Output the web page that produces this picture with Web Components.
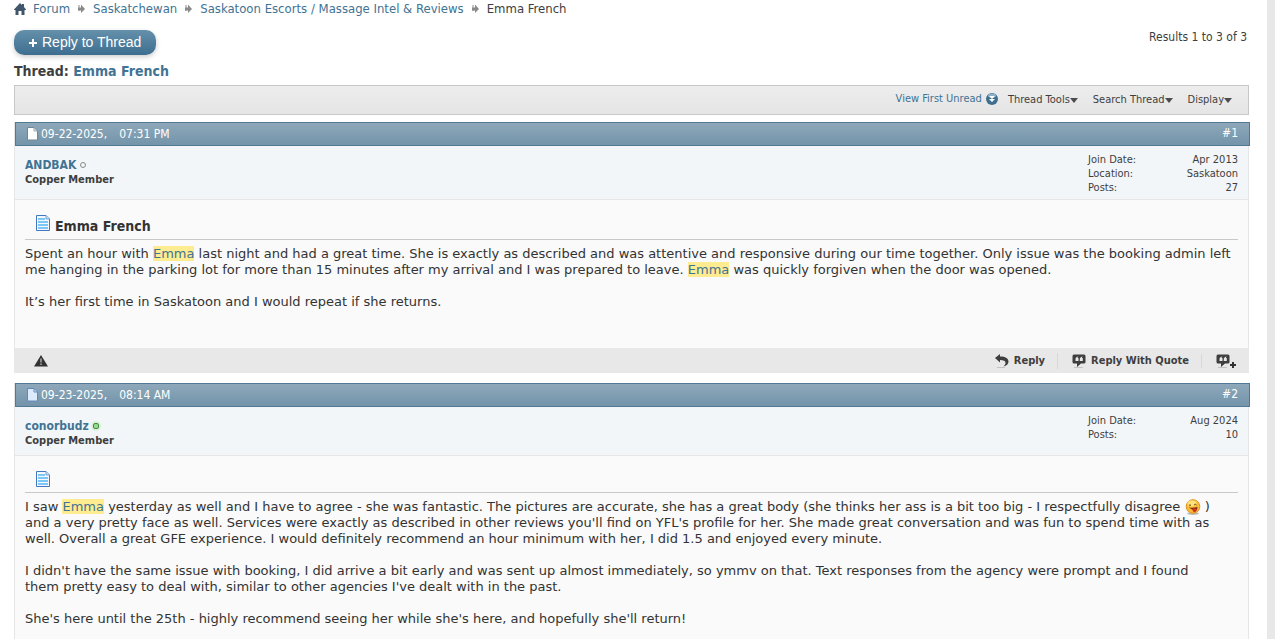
<!DOCTYPE html>
<html lang="en">
<head>
<meta charset="utf-8">
<title>Emma French</title>
<style>
html {
  scrollbar-width: none;
  background: #e8e8e8;
}
body {
  margin: 0 8px 0 0;
  min-height: 100vh;
  background: #fff;
  color: #3e3e3e;
  font: 13px/16px "DejaVu Sans Condensed", "DejaVu Sans", sans-serif;
}
main {
  padding: 0 18px 0 14px;
}
mark {
  background: #ffeb90;
  color: #417394;
}
.text {
  margin: 0 0 16px;
}
.text:last-child {
  margin: 0;
}
.smile {
  vertical-align: -4px;
}
</style>
</head>
<body>
<main>
  <bread-crumb>
    <a href="#">Forum</a>
    <a href="#">Saskatchewan</a>
    <a href="#">Saskatoon Escorts / Massage Intel &amp; Reviews</a>
    <span>Emma French</span>
  </bread-crumb>
  <thread-head results="Results 1 to 3 of 3">Emma French</thread-head>
  <thread-toolbar></thread-toolbar>

  <forum-post number="1" date="09-22-2025," time="07:31 PM" user="ANDBAK" rank="Copper Member"
    joined="Apr 2013" location="Saskatoon" posts="27" heading="Emma French" controls>
    <p class="text">Spent an hour with <mark>Emma</mark> last night and had a great time. She is exactly as described and was attentive and responsive during our time together. Only issue was the booking admin left<br>me hanging in the parking lot for more than 15 minutes after my arrival and I was prepared to leave. <mark>Emma</mark> was quickly forgiven when the door was opened.</p>
    <p class="text">It’s her first time in Saskatoon and I would repeat if she returns.</p>
  </forum-post>

  <forum-post number="2" date="09-23-2025," time="08:14 AM" user="conorbudz" rank="Copper Member"
    joined="Aug 2024" posts="10" online unread>
    <p class="text">I saw <mark>Emma</mark> yesterday as well and I have to agree - she was fantastic. The pictures are accurate, she has a great body (she thinks her ass is a bit too big - I respectfully disagree <svg class="smile" width="16" height="16" viewBox="0 0 16 16"><ellipse cx="8" cy="14.500" rx="6" ry="1.500" fill="#bbb"/><circle cx="8" cy="7.500" r="6.800" fill="#f9bd3a" stroke="#dc9426"/><ellipse cx="7" cy="4.500" rx="4.500" ry="3" fill="#ffe27a"/><path d="M4 6.500q1-1.500 2 0M9 6q1.500-1.500 2.500 0" fill="none" stroke="#6b3d08"/><path d="M3.500 8.500q4.500.8 9-.5 0 4-3.500 4.500-1-2-5.500-4z" fill="#7c2d12"/><path d="M7.500 9.500h4v2q-1 2.500-2.800 1.500-1.200-1-1.200-3.500z" fill="#d9301f"/></svg> )<br>and a very pretty face as well. Services were exactly as described in other reviews you'll find on YFL's profile for her. She made great conversation and was fun to spend time with as<br>well. Overall a great GFE experience. I would definitely recommend an hour minimum with her, I did 1.5 and enjoyed every minute.</p>
    <p class="text">I didn't have the same issue with booking, I did arrive a bit early and was sent up almost immediately, so ymmv on that. Text responses from the agency were prompt and I found<br>them pretty easy to deal with, similar to other agencies I've dealt with in the past.</p>
    <p class="text">She's here until the 25th - highly recommend seeing her while she's here, and hopefully she'll return!</p>
  </forum-post>
</main>

<script>
const sheet = `
* { box-sizing: border-box; }
a { color: #417394; text-decoration: none; }
button { border: 0; padding: 0; background: none; color: inherit; font: inherit; cursor: pointer; }
svg { display: block; flex: none; }
`;

const arrow = `<svg width="9" height="10" viewBox="0 0 9 10"><path d="M1 1h2v6H1z" fill="#c6c6c6"/><path d="M1 3.500h3V.5L8 5 4 9V6.500H1z" fill="#8a8a8a"/></svg>`;

class BreadCrumb extends HTMLElement {
  constructor() {
    super();
    this.attachShadow({ mode: 'open' });
  }

  connectedCallback() {
    const crumbs = [...this.children];
    crumbs.forEach((el, i) => { el.slot = 'c' + i; });
    this.shadowRoot.innerHTML = `
<style>${sheet}
:host { display: block; }
nav { display: flex; align-items: center; gap: 7px; height: 17px; }
::slotted(a) { color: #417394; text-decoration: none; }
</style>
<nav>
  <a href="#" aria-label="Home"><svg width="12" height="12" viewBox="0 0 12 12"><path d="M6 0l2 2V1h2v3l2 2.500V7h-1.500v5h-3V8h-3v4h-3V7H0v-.5z" fill="#41566b"/></svg></a>
  ${crumbs.map((el, i) => (i ? arrow : '') + `<slot name="c${i}"></slot>`).join('')}
</nav>`;
  }
}
customElements.define('bread-crumb', BreadCrumb);

class ThreadHead extends HTMLElement {
  constructor() {
    super();
    this.attachShadow({ mode: 'open' });
  }

  connectedCallback() {
    this.shadowRoot.innerHTML = `
<style>${sheet}
:host { display: block; padding-top: 13px; }
.row { display: flex; justify-content: space-between; align-items: flex-start; padding-right: 2px; }
.reply {
  display: flex; align-items: center; gap: 5px;
  height: 25px; padding: 0 15px;
  border-radius: 10px;
  background: linear-gradient(#6490ab, #3d6e90);
  box-shadow: 0 2px 5px rgba(0, 0, 0, .2);
  color: #fff;
  font: 14px/25px "Liberation Sans", Arial, sans-serif;
}
.results { font-size: 12px; line-height: 14px; }
h1 { margin: 6px 0 0; font-size: 14px; line-height: 20px; }
</style>
<div class="row">
  <button class="reply"><svg width="8" height="8" viewBox="0 0 8 8"><path d="M4 0v8M0 4h8" stroke="#fff" stroke-width="2"/></svg>Reply to Thread</button>
  <span class="results">${this.getAttribute('results')}</span>
</div>
<h1>Thread: <a href="#"><slot></slot></a></h1>`;
  }
}
customElements.define('thread-head', ThreadHead);

class ThreadToolbar extends HTMLElement {
  constructor() {
    super();
    this.attachShadow({ mode: 'open' });
    const caret = `<svg width="8" height="5" viewBox="0 0 8 5"><path d="M0 0h8L4 5z" fill="#4c4c4c"/></svg>`;
    this.shadowRoot.innerHTML = `
<style>${sheet}
:host {
  display: flex; justify-content: flex-end; align-items: center; gap: 15px;
  height: 28px; margin: 4px 0 7px; padding-right: 16px;
  border: 1px solid #c8c8c8;
  background: linear-gradient(#ededed, #e5e5e5);
  font-size: 11px;
}
a, button { display: flex; align-items: center; }
a { gap: 4px; margin: 0 -5px 2px 0; }
</style>
<a href="#">View First Unread <svg width="12" height="12" viewBox="0 0 12 12"><circle cx="6" cy="6" r="6" fill="#3f6f8f"/><ellipse cx="6" cy="2.500" rx="4" ry="2" fill="#8fb0c6"/><path d="M3 3h6L6 6zM3 6h6L6 9z" fill="#fff"/></svg></a>
<button>Thread Tools${caret}</button>
<button>Search Thread${caret}</button>
<button>Display${caret}</button>`;
  }
}
customElements.define('thread-toolbar', ThreadToolbar);

const bubble = `<path d="M2 .5h10q1.500 0 1.500 1.500v6q0 1.500-1.500 1.500H9L5 13V9.500H2Q.5 9.500.5 8V2Q.5.500 2 .5z" fill="#3e3e3e"/><path d="M6.500 2.500q-1 .5-1 1.500h1v3h-3V5q0-2 3-2.500zM10.800 2.500q-1 .5-1 1.500h1v3h-3V5q0-2 3-2.500z" fill="#e8e8e8"/><path d="M2 13.500h9" stroke="#c4c4c4"/>`;

class ForumPost extends HTMLElement {
  constructor() {
    super();
    this.attachShadow({ mode: 'open' });
  }

  connectedCallback() {
    const get = (name) => this.getAttribute(name) || '';
    const unread = this.hasAttribute('unread');
    const dot = this.hasAttribute('online')
      ? '<circle cx="5" cy="5" r="5" fill="#d9efd8"/><rect x="2.500" y="2.500" width="5" height="5" rx="1.500" fill="#9ad695" stroke="#3f8f3c"/>'
      : '<circle cx="5" cy="5" r="2.500" fill="#f2f6f8" stroke="#8a8a8a"/>';
    const stats = [['Join Date:', 'joined'], ['Location:', 'location'], ['Posts:', 'posts']]
      .filter(([, key]) => this.hasAttribute(key))
      .map(([label, key]) => `<dt>${label}</dt><dd>${get(key)}</dd>`)
      .join('');

    this.shadowRoot.innerHTML = `
<style>${sheet}
:host { display: block; margin-bottom: 10px; }
.post { border: solid #e6e6e6; border-width: 0 1px; }
.head {
  display: flex; align-items: center; gap: 3px;
  height: 24px; margin-right: -2px; padding: 0 11px;
  border: 1px solid #517994;
  background: linear-gradient(#8ea8ba, #7394aa);
  color: #fff;
  font-size: 12px;
}
.head time { display: flex; gap: 12px; flex: 1; }
.head a { padding-bottom: 2px; color: #fff; }
.user {
  display: flex; justify-content: space-between;
  min-height: 49px; padding: 7px 10px 4px;
  border-bottom: 1px solid #e6e6e6;
  background: #f2f6f8;
}
.name { display: flex; align-items: center; gap: 2px; margin-top: 4px; font-size: 12px; font-weight: bold; }
.rank { font-size: 11px; line-height: 14px; font-weight: bold; }
dl {
  display: grid; grid-template-columns: 1fr auto;
  align-content: start;
  width: 150px; margin: 0;
  font-size: 11px; line-height: 14px;
}
dd { margin: 0; text-align: right; }
.body { padding: 16px 10px 38px; background: #fafafa; }
h2 {
  display: flex; gap: 4px;
  min-height: 21px; margin: 0 0 6px; padding: 0 0 3px 10px;
  border-bottom: 1px solid #c8c8c8;
  font-size: 14px; line-height: 20px;
  color: #333;
}
h2 svg { margin-top: -1px; }
.content { font-family: "DejaVu Sans", Verdana, sans-serif; color: #333; }
footer {
  display: flex; align-items: center;
  height: 25px; margin: 0 -1px; padding: 0 13px 0 20px;
  background: #e8e8e8;
  font-size: 11px; font-weight: bold;
}
footer a { display: flex; align-items: center; gap: 5px; color: #3e3e3e; }
footer a:first-child { flex: 1; }
footer a + a + a { margin-left: 12px; padding-left: 14px; border-left: 1px solid #d8d8d8; }
</style>
<article class="post">
  <div class="head">
    <svg width="11" height="14" viewBox="0 0 11 14"><path d="M.5.500h6.500l3.500 3.500v9H.5z" fill="${unread ? '#dcebfb' : '#fff'}" stroke="${unread ? '#6289bd' : '#75858f'}"/><path d="M7 .5V4h3.500" fill="none" stroke="${unread ? '#6289bd' : '#9aa5ab'}"/></svg>
    <time><span>${get('date')}</span><span>${get('time')}</span></time>
    <a href="#">#${get('number')}</a>
  </div>
  <div class="user">
    <div>
      <div class="name"><a href="#">${get('user')}</a><svg width="10" height="10" viewBox="0 0 10 10">${dot}</svg></div>
      <div class="rank">${get('rank')}</div>
    </div>
    <dl>${stats}</dl>
  </div>
  <div class="body">
    <h2><svg width="16" height="16" viewBox="0 0 16 16"><path d="M1.500.500h9.500l3.500 3.500v11.500h-13z" fill="#f2f8fe" stroke="#3f78bf"/><path d="M3 3h7v2H3zM3 6h10v2H3zM3 9h10v2H3zM3 12h10v2H3z" fill="#7cc6fa"/><path d="M11 .5V4h3.500" fill="#c5dcf3" stroke="#7ba4d6"/></svg>${get('heading')}</h2>
    <div class="content"><slot></slot></div>
  </div>
  ${this.hasAttribute('controls') ? `
  <footer>
    <a href="#" aria-label="Report"><svg width="14" height="12" viewBox="0 0 14 12"><path d="M7 0l7 11.500H0z" fill="#333"/><path d="M7 3.500v4M7 8.500V10" stroke="#e8e8e8"/></svg></a>
    <a href="#"><svg width="14" height="14" viewBox="0 0 14 14"><path d="M0 4L5 0v2.500c5.500 0 8.500 2 8.500 5 0 2.500-2 4.500-5 5 1.500-1.500 2-2.500 2-3.800C10.500 7 8.500 6 5 6v2.500z" fill="#3e3e3e"/><path d="M2 13.500h8" stroke="#c4c4c4"/></svg>Reply</a>
    <a href="#"><svg width="14" height="14" viewBox="0 0 14 14">${bubble}</svg>Reply With Quote</a>
    <a href="#" aria-label="Multi-quote"><svg width="20" height="14" viewBox="0 0 20 14">${bubble}<path d="M17 8v6M14 11h6" stroke="#333" stroke-width="2"/></svg></a>
  </footer>` : ''}
</article>`;
  }
}
customElements.define('forum-post', ForumPost);
</script>
</body>
</html>
